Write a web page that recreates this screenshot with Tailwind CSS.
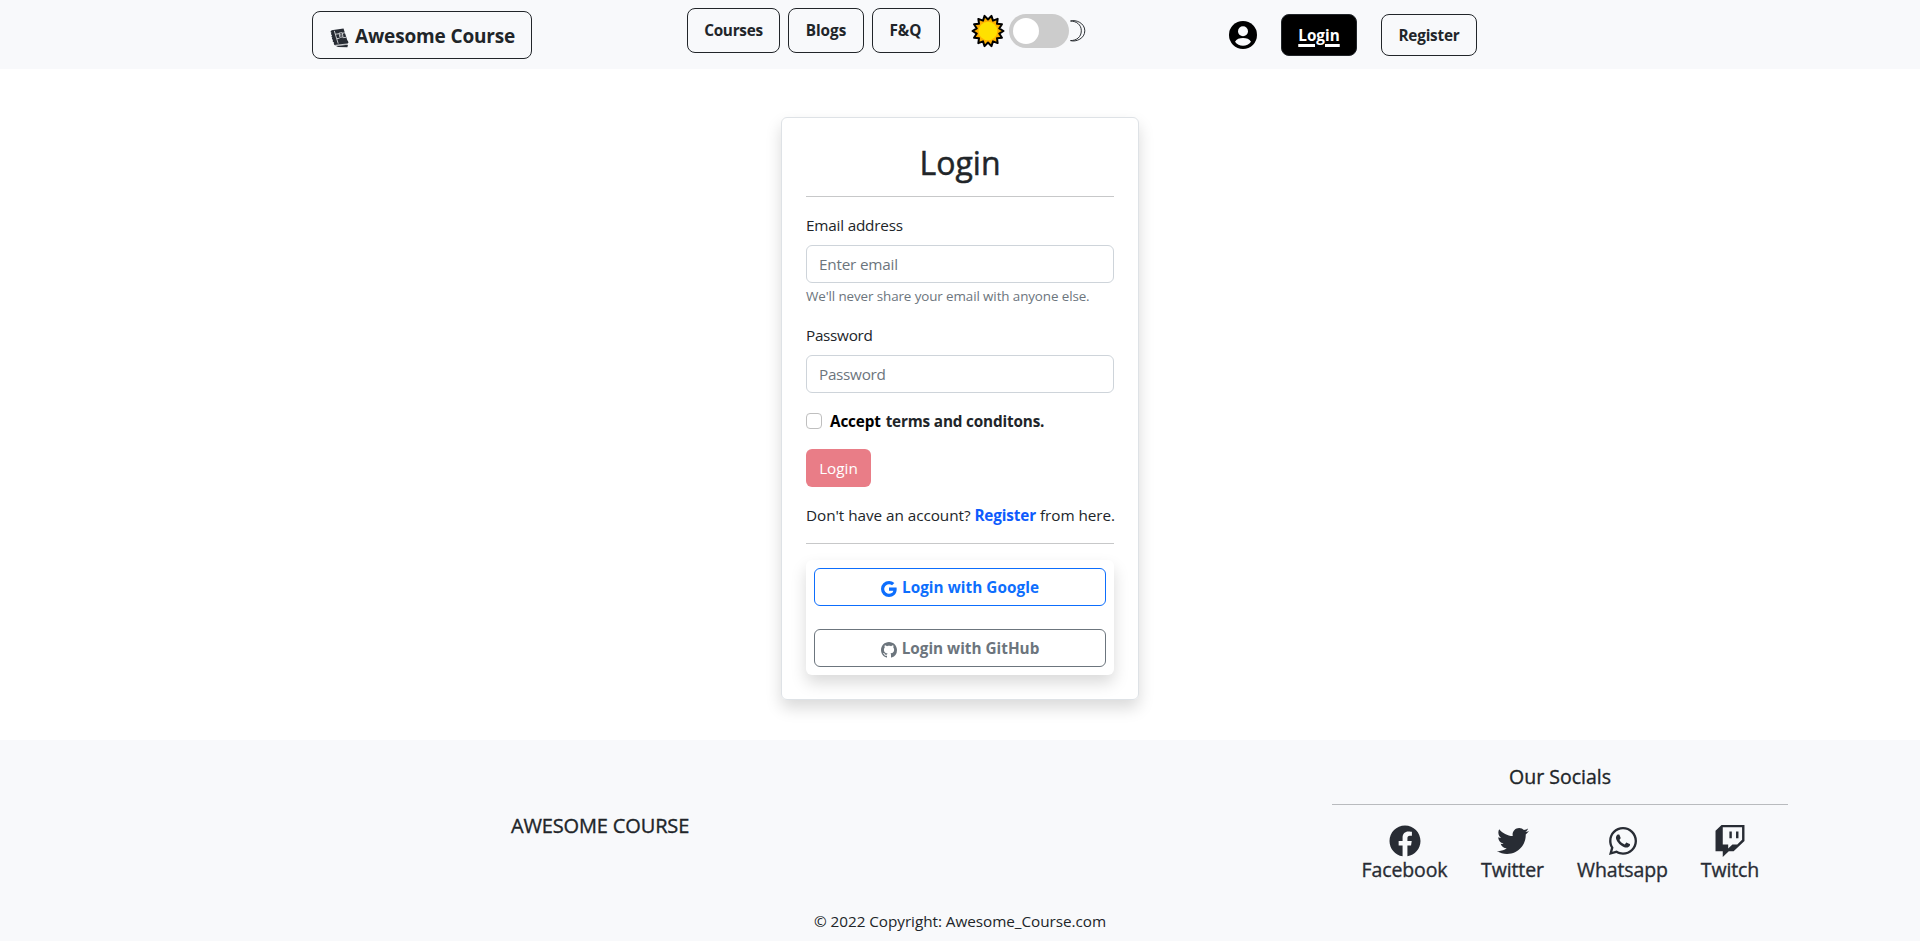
<!DOCTYPE html>
<html lang="en">
<head>
<meta charset="utf-8">
<title>Awesome Course</title>
<script src="https://cdn.jsdelivr.net/npm/@tailwindcss/browser@4"></script>
</head>
<body class="h-[941px] overflow-hidden flex flex-col bg-white text-[#212529] font-['Open_Sans','Noto_Sans',sans-serif] text-[15.3px] leading-6 whitespace-nowrap">

<nav class="h-[69px] shrink-0 bg-[#f8f9fb] pl-[312px] flex items-start">
  <a class="mt-[11px] w-[220px] h-12 border border-[#212529] rounded-lg flex items-center pl-[17px] text-[19px] font-bold">
    <svg class="w-[19px] h-5 mt-[5px] mr-[6px]" viewBox="0 0 19 20">
      <path d="M1.5 2.200 13.500.6l4.600 14.200-11.400 1.800z" fill="#282c34"/>
      <path d="M1.400 2.400c-1.300.8-.9 2 .2 2.300-1.100.8-.6 2 .5 2.500-1.100.8-.7 2 .3 2.400-1 .8-.5 2 .7 2.500-.9.900-.3 2 .9 2.300-.5 1.100-.1 2.800 1.500 3l11-.8 2-2-.6-1.500" fill="#282c34"/>
      <path d="M5.400 17.300l11.600-1.300M5.500 6.200l3.700-.5M12.400 5.200l2.600-.4M7 10.600l2.500-.3M12.800 9.700l3.200-.4M4.300 2.800l3.900 12.800M9.200 5l3-.3.800 4.200-3.200.4zM10.900 6v1.800" fill="none" stroke="#f8f9fb" stroke-width=".75"/>
      <path d="M6 18 18 16.800l-.6 2.500-9.400-.2z" fill="#282c34"/>
    </svg>
    <span class="tracking-[-0.15px] pt-0.5">Awesome Course</span>
  </a>

  <div class="ml-[155px] mt-2 flex gap-2 font-bold">
    <a class="w-[93px] h-[45px] border border-[#212529] rounded-lg flex items-center justify-center pb-0.5 tracking-[-0.25px]">Courses</a>
    <a class="w-[76px] h-[45px] border border-[#212529] rounded-lg flex items-center justify-center pb-0.5">Blogs</a>
    <a class="w-[68px] h-[45px] border border-[#212529] rounded-lg flex items-center justify-center pb-0.5 pr-px">F&amp;Q</a>
  </div>

  <div class="ml-[31px] mt-[14px] h-[34px] flex items-center">
    <svg class="size-[34px] overflow-visible" viewBox="-17 -17 34 34">
      <polygon points="0,-11.5 3.45,-15.11 4.99,-10.36 9.66,-12.12 8.99,-7.17 13.97,-6.73 11.21,-2.56 15.5,0 11.21,2.56 13.97,6.73 8.99,7.17 9.66,12.12 4.99,10.36 3.45,15.11 0,11.5 -3.45,15.11 -4.99,10.36 -9.66,12.12 -8.99,7.17 -13.97,6.73 -11.21,2.56 -15.5,0 -11.21,-2.56 -13.97,-6.73 -8.99,-7.17 -9.66,-12.12 -4.99,-10.36 -3.45,-15.11" fill="#ffb000" stroke="#000" stroke-width="2" stroke-linejoin="round"/>
      <circle r="9.3" fill="#ffe000"/>
    </svg>
    <span class="ml-1 w-[60px] h-[34px] rounded-full bg-[#ccc] flex items-center pl-1"><span class="size-[26px] rounded-full bg-white"></span></span>
    <svg class="ml-px w-[17px] h-6" viewBox="0 0 17 24">
      <path d="M.5 2C6 .4 14.800 4 14.800 11.800S6 23.200.5 21.600C6.500 21.600 11.300 18 11.300 11.800S6.500 2.200.5 2z" fill="none" stroke="#212529" stroke-width=".95"/>
    </svg>
  </div>

  <div class="ml-[142px] mt-[14px] h-[42px] flex items-center font-bold">
    <svg class="size-7" viewBox="0 0 28 28"><circle cx="14" cy="14" r="14"/><circle cx="14" cy="10.300" r="5" fill="#f8f9fb"/><path d="M6 20.700c1.500-2.600 4.500-3.700 8-3.700s6.500 1.100 8 3.700c-1.900 2.600-4.800 4-8 4s-6.100-1.400-8-4z" fill="#f8f9fb"/></svg>
    <a class="ml-6 w-[76px] h-[42px] rounded-lg border border-[#212529] bg-black text-white flex items-center justify-center underline decoration-[3px] underline-offset-[3px]">Login</a>
    <a class="ml-6 w-24 h-[42px] rounded-lg border border-[#212529] flex items-center justify-center tracking-[-0.2px]">Register</a>
  </div>
</nav>

<main class="h-[671px] shrink-0 pt-12 flex justify-center items-start">
  <section class="w-[358px] h-[583px] border border-[#dee2e6] rounded-md shadow-[0_8px_16px_rgba(0,0,0,0.15)] p-6 flex flex-col">
    <h2 class="h-[38px] text-[32px] leading-[41px] text-center [-webkit-text-stroke:0.5px]">Login</h2>
    <div class="mt-4 h-px shrink-0 bg-[#c7c8c9]"></div>
    <label class="mt-4 tracking-[-0.2px]">Email address</label>
    <div class="mt-2 h-[38px] shrink-0 border border-[#ced4da] rounded-md px-3 flex items-center text-[#6c757d] tracking-[-0.2px]">Enter email</div>
    <div class="mt-[3px] h-[21px] leading-5 text-[13.400px] text-[#6c757d] tracking-[-0.1px]">We'll never share your email with anyone else.</div>
    <label class="mt-4 tracking-[-0.3px]">Password</label>
    <div class="mt-2 h-[38px] shrink-0 border border-[#ced4da] rounded-md px-3 flex items-center text-[#6c757d] tracking-[-0.3px]">Password</div>
    <div class="mt-4 flex items-center h-6 font-bold tracking-[-0.17px]">
      <span class="size-4 rounded border border-[#bfbfbf] mr-2"></span><span class="text-black">Accept</span><span class="ml-[5px]">terms and conditons.</span>
    </div>
    <div class="mt-4 w-[65px] h-[38px] shrink-0 rounded-md bg-[#e97d87] text-white flex items-center justify-center">Login</div>
    <p class="mt-4 tracking-[-0.05px]">Don't have an account? <a class="font-bold text-[#0d5bfd] tracking-[-0.13px]">Register</a> from here.</p>
    <div class="mt-4 h-px shrink-0 bg-[#c7c8c9]"></div>
    <div class="mt-4 h-[115px] shrink-0 p-2 rounded-md shadow-[0_8px_16px_rgba(0,0,0,0.15)] flex flex-col justify-between font-bold">
      <a class="h-[38px] border border-[#0d6efd] text-[#0d6efd] rounded-md flex items-center justify-center gap-[5px]">
        <svg class="size-4 mt-1" viewBox="0 0 16 16" fill="currentColor"><path d="M15.545 6.558a9.420 9.420 0 0 1 .139 1.626c0 2.434-.87 4.492-2.384 5.885h.002C11.978 15.292 10.158 16 8 16A8 8 0 1 1 8 0a7.689 7.689 0 0 1 5.352 2.082l-2.284 2.284A4.347 4.347 0 0 0 8 3.166c-2.087 0-3.860 1.408-4.492 3.304a4.792 4.792 0 0 0 0 3.063h.003c.635 1.893 2.405 3.301 4.492 3.301 1.078 0 2.004-.276 2.722-.764h-.003a3.702 3.702 0 0 0 1.599-2.431H8v-3.080h7.545z"/></svg>
        <span class="tracking-[0.05px]">Login with Google</span></a>
      <a class="h-[38px] border border-[#6c757d] text-[#6c757d] rounded-md flex items-center justify-center gap-[5px]">
        <svg class="size-4 mt-1" viewBox="0 0 16 16" fill="currentColor"><path d="M8 0C3.580 0 0 3.580 0 8c0 3.540 2.290 6.530 5.470 7.590.4.070.55-.17.55-.38 0-.19-.01-.82-.01-1.490-2.010.37-2.530-.49-2.690-.94-.09-.23-.48-.94-.82-1.130-.28-.15-.68-.52-.01-.53.63-.01 1.080.58 1.230.82.72 1.210 1.870.87 2.330.66.070-.52.28-.87.51-1.070-1.780-.2-3.640-.89-3.640-3.950 0-.87.31-1.590.82-2.150-.08-.2-.36-1.020.08-2.120 0 0 .67-.21 2.200.82.64-.18 1.320-.27 2-.27.68 0 1.360.09 2 .27 1.530-1.040 2.200-.82 2.200-.82.44 1.100.16 1.920.08 2.120.51.56.82 1.270.82 2.150 0 3.070-1.870 3.750-3.650 3.950.29.25.54.73.54 1.480 0 1.070-.01 1.930-.01 2.200 0 .21.15.46.55.38A8.012 8.012 0 0 0 16 8c0-4.420-3.580-8-8-8z"/></svg>
        <span>Login with GitHub</span></a>
    </div>
  </section>
</main>

<footer class="h-[201px] shrink-0 bg-[#f8f9fb] flex flex-col">
  <div class="h-[169px] flex justify-between pl-[511px] pr-[132px]">
    <h5 class="mt-[74px] text-[20px] [-webkit-text-stroke:0.35px] tracking-[-0.15px]">AWESOME COURSE</h5>
    <div class="w-[456px] flex flex-col">
      <h5 class="mt-[25px] text-center text-[19.500px] [-webkit-text-stroke:0.35px]">Our Socials</h5>
      <div class="mt-[15px] h-px bg-[#b9bbbe]"></div>
      <div class="mt-5 flex justify-center gap-[33px] text-[19.500px] text-[#282c34] [-webkit-text-stroke:0.35px] tracking-[-0.1px]">
        <a class="flex flex-col items-center gap-px w-[87px]"><svg class="size-8" viewBox="0 0 512 512" fill="currentColor" stroke="none"><path d="M504 256C504 119 393 8 256 8S8 119 8 256c0 123.780 90.690 226.380 209.250 245V327.690h-63V256h63v-54.640c0-62.150 37-96.480 93.670-96.480 27.140 0 55.520 4.840 55.520 4.840v61h-31.280c-30.800 0-40.410 19.120-40.410 38.730V256h68.780l-11 71.690h-57.780V501C413.310 479.380 504 379.780 504 256z"/></svg><span>Facebook</span></a>
        <a class="flex flex-col items-center gap-px w-[63px]"><svg class="size-8" viewBox="0 0 512 512" fill="currentColor" stroke="none"><path d="M459.370 151.716c.325 4.548.325 9.097.325 13.645 0 138.720-105.583 298.558-298.558 298.558-59.452 0-114.680-17.219-161.137-47.106 8.447.974 16.568 1.299 25.340 1.299 49.055 0 94.213-16.568 130.274-44.832-46.132-.975-84.792-31.188-98.112-72.772 6.498.974 12.995 1.624 19.818 1.624 9.421 0 18.843-1.300 27.614-3.573-48.081-9.747-84.143-51.980-84.143-102.985v-1.299c13.969 7.797 30.214 12.670 47.431 13.319-28.264-18.843-46.781-51.005-46.781-87.391 0-19.492 5.197-37.360 14.294-52.954 51.655 63.675 129.300 105.258 216.365 109.807-1.624-7.797-2.599-15.918-2.599-24.040 0-57.828 46.782-104.934 104.934-104.934 30.213 0 57.502 12.670 76.670 33.137 23.715-4.548 46.456-13.320 66.599-25.340-7.798 24.366-24.366 44.833-46.132 57.827 21.117-2.273 41.584-8.122 60.426-16.243-14.292 20.791-32.161 39.308-52.628 54.253z"/></svg><span>Twitter</span></a>
        <a class="flex flex-col items-center gap-px w-[91px]"><svg class="w-7 h-8" viewBox="0 0 448 512" fill="currentColor" stroke="none"><path d="M380.900 97.100C339 55.100 283.200 32 223.900 32c-122.400 0-222 99.600-222 222 0 39.100 10.200 77.300 29.600 111L0 480l117.700-30.900c32.400 17.700 68.900 27 106.100 27h.1c122.300 0 224.100-99.600 224.100-222 0-59.300-25.200-115-67.100-157zm-157 341.600c-33.200 0-65.700-8.900-94-25.700l-6.700-4-69.800 18.300L72 359.200l-4.400-7c-18.500-29.400-28.200-63.300-28.200-98.200 0-101.700 82.800-184.500 184.600-184.500 49.300 0 95.600 19.200 130.400 54.100 34.800 34.900 56.200 81.200 56.100 130.500 0 101.800-84.900 184.600-186.600 184.600zm101.200-138.200c-5.500-2.800-32.800-16.200-37.900-18-5.100-1.900-8.800-2.800-12.500 2.800-3.700 5.600-14.300 18-17.600 21.800-3.200 3.700-6.500 4.200-12 1.400-32.600-16.300-54-29.100-75.500-66-5.700-9.800 5.700-9.100 16.300-30.300 1.800-3.700.9-6.900-.5-9.700-1.400-2.800-12.500-30.100-17.100-41.200-4.500-10.800-9.100-9.300-12.500-9.500-3.200-.2-6.900-.2-10.600-.2-3.700 0-9.700 1.400-14.800 6.900-5.100 5.600-19.400 19-19.400 46.300 0 27.300 19.900 53.700 22.600 57.400 2.800 3.700 39.100 59.700 94.800 83.800 35.200 15.200 49 16.500 66.600 13.900 10.700-1.600 32.800-13.400 37.400-26.400 4.600-13 4.600-24.100 3.200-26.400-1.300-2.500-5-3.900-10.500-6.600z"/></svg><span>Whatsapp</span></a>
        <a class="flex flex-col items-center gap-px w-[58px]"><svg class="size-8" viewBox="0 0 512 512" fill="currentColor" stroke="none"><path d="M391.170,103.470H352.540v109.700h38.630ZM285,103H246.370V212.750H285ZM120.830,0,24.310,91.420V420.580H140.140V512l96.530-91.420h77.250L487.690,256V0ZM449.070,237.750l-77.220,73.120H294.610l-67.600,64v-64H140.140V36.580H449.070Z"/></svg><span>Twitch</span></a>
      </div>
    </div>
  </div>
  <p class="text-center tracking-[-0.05px]">© 2022 Copyright: Awesome_Course.com</p>
</footer>
</body>
</html>
